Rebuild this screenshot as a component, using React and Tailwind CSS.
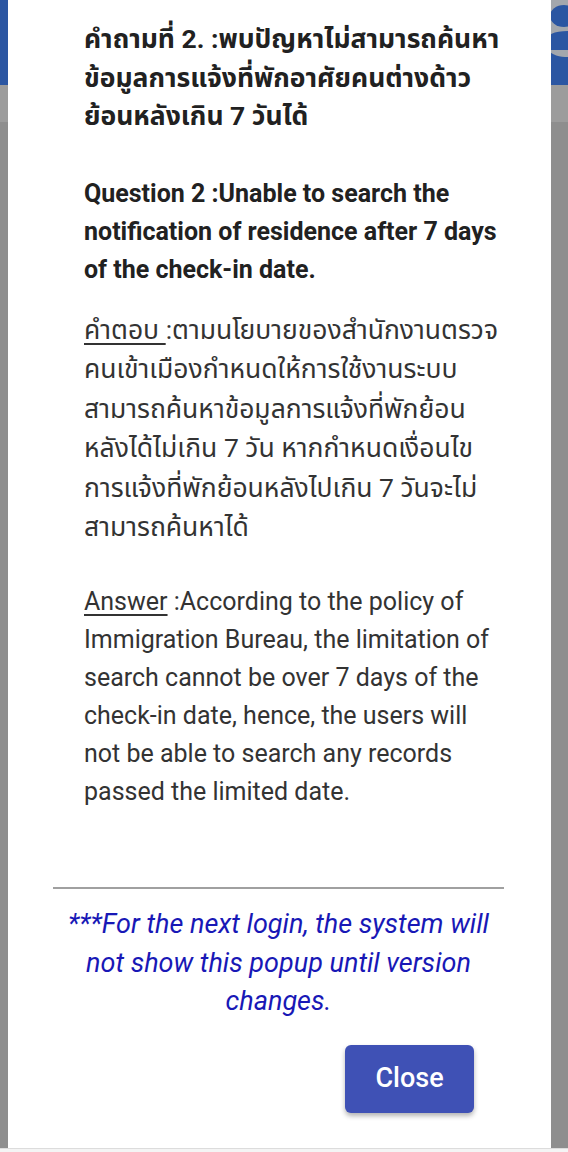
import React from 'react';

const FONT = { fontFamily: 'Roboto, "Noto Sans", "Noto Sans Thai", "Noto Sans Thai Looped", sans-serif' };

function HeaderLogo() {
  // blue logo mark peeking out from behind the dialog, top right
  return (
    <svg width="40" height="85" viewBox="0 0 40 85" className="block">
      <rect x="0" y="0" width="40" height="85" fill="#2b56a2" />
      <rect x="0" y="0" width="40" height="58" fill="#a3a7ad" />
      <ellipse cx="36" cy="16" rx="14" ry="11" fill="#2b56a2" />
      <path d="M18 44 C18 34 26 31 40 31 L40 50 L24 50 C20 50 18 48 18 44 Z" fill="#2b56a2" />
      <path d="M18 48 C24 56 32 57 40 57 L40 60 L18 60 Z" fill="#2b56a2" />
    </svg>
  );
}

export default function App() {
  return (
    <div className="relative w-full h-[1152px] overflow-hidden flex flex-col bg-[#8e8e8e]" style={FONT}>
      {/* page behind the overlay */}
      <div className="h-[85px] bg-[#2b56a2] flex justify-end">
        <HeaderLogo />
      </div>
      <div className="h-[37px] bg-[#9c9c9c]" />
      <div className="flex-1 bg-[#8e8e8e]" />
      <div className="h-[4px] bg-[#f4f4f4] border-t border-[#dcdcdc]" />

      {/* dialog */}
      <div className="absolute left-[8px] right-[17px] top-0 bottom-[4px] bg-white flex flex-col pt-[20px] pb-[35px] pl-[45px] pr-[47px]">
        <div className="pl-[31px] text-[#212121]">
          <p className="text-[26.5px] font-bold leading-[38.5px] whitespace-nowrap">
            คำถามที่ 2. :พบปัญหาไม่สามารถค้นหา<br />
            ข้อมูลการแจ้งที่พักอาศัยคนต่างด้าว<br />
            ย้อนหลังเกิน 7 วันได้
          </p>
          <p className="mt-[39px] text-[25px] font-bold leading-[38px] whitespace-nowrap">
            Question 2 :Unable to search the<br />
            notification of residence after 7 days<br />
            of the check-in date.
          </p>
          <p className="mt-[21px] text-[26.5px] leading-[39.6px] text-[#333333] whitespace-nowrap">
            <span className="underline underline-offset-4">คำตอบ </span>:ตามนโยบายของสำนักงานตรวจ<br />
            คนเข้าเมืองกำหนดให้การใช้งานระบบ<br />
            สามารถค้นหาข้อมูลการแจ้งที่พักย้อน<br />
            หลังได้ไม่เกิน 7 วัน หากกำหนดเงื่อนไข<br />
            การแจ้งที่พักย้อนหลังไปเกิน 7 วันจะไม่<br />
            สามารถค้นหาได้
          </p>
          <p className="mt-[36px] text-[25px] leading-[38px] text-[#333333] whitespace-nowrap">
            <span className="underline underline-offset-4">Answer</span> :According to the policy of<br />
            Immigration Bureau, the limitation of<br />
            search cannot be over 7 days of the<br />
            check-in date, hence, the users will<br />
            not be able to search any records<br />
            passed the limited date.
          </p>
        </div>

        <div className="mt-[76px] h-[2px] bg-[#a0a0a0]" />

        <p className="mt-[16px] text-center italic text-[27px] leading-[38.5px] text-[#1818b6] whitespace-nowrap">
          ***For the next login, the system will<br />
          not show this popup until version<br />
          changes.
        </p>

        <div className="mt-[24px] flex justify-end pr-[30px]">
          <button className="w-[129px] h-[68px] rounded-[6px] bg-[#3f51b5] text-white text-[27px] font-medium shadow-[0_3px_5px_rgba(0,0,0,0.3)]">
            Close
          </button>
        </div>
      </div>
    </div>
  );
}
